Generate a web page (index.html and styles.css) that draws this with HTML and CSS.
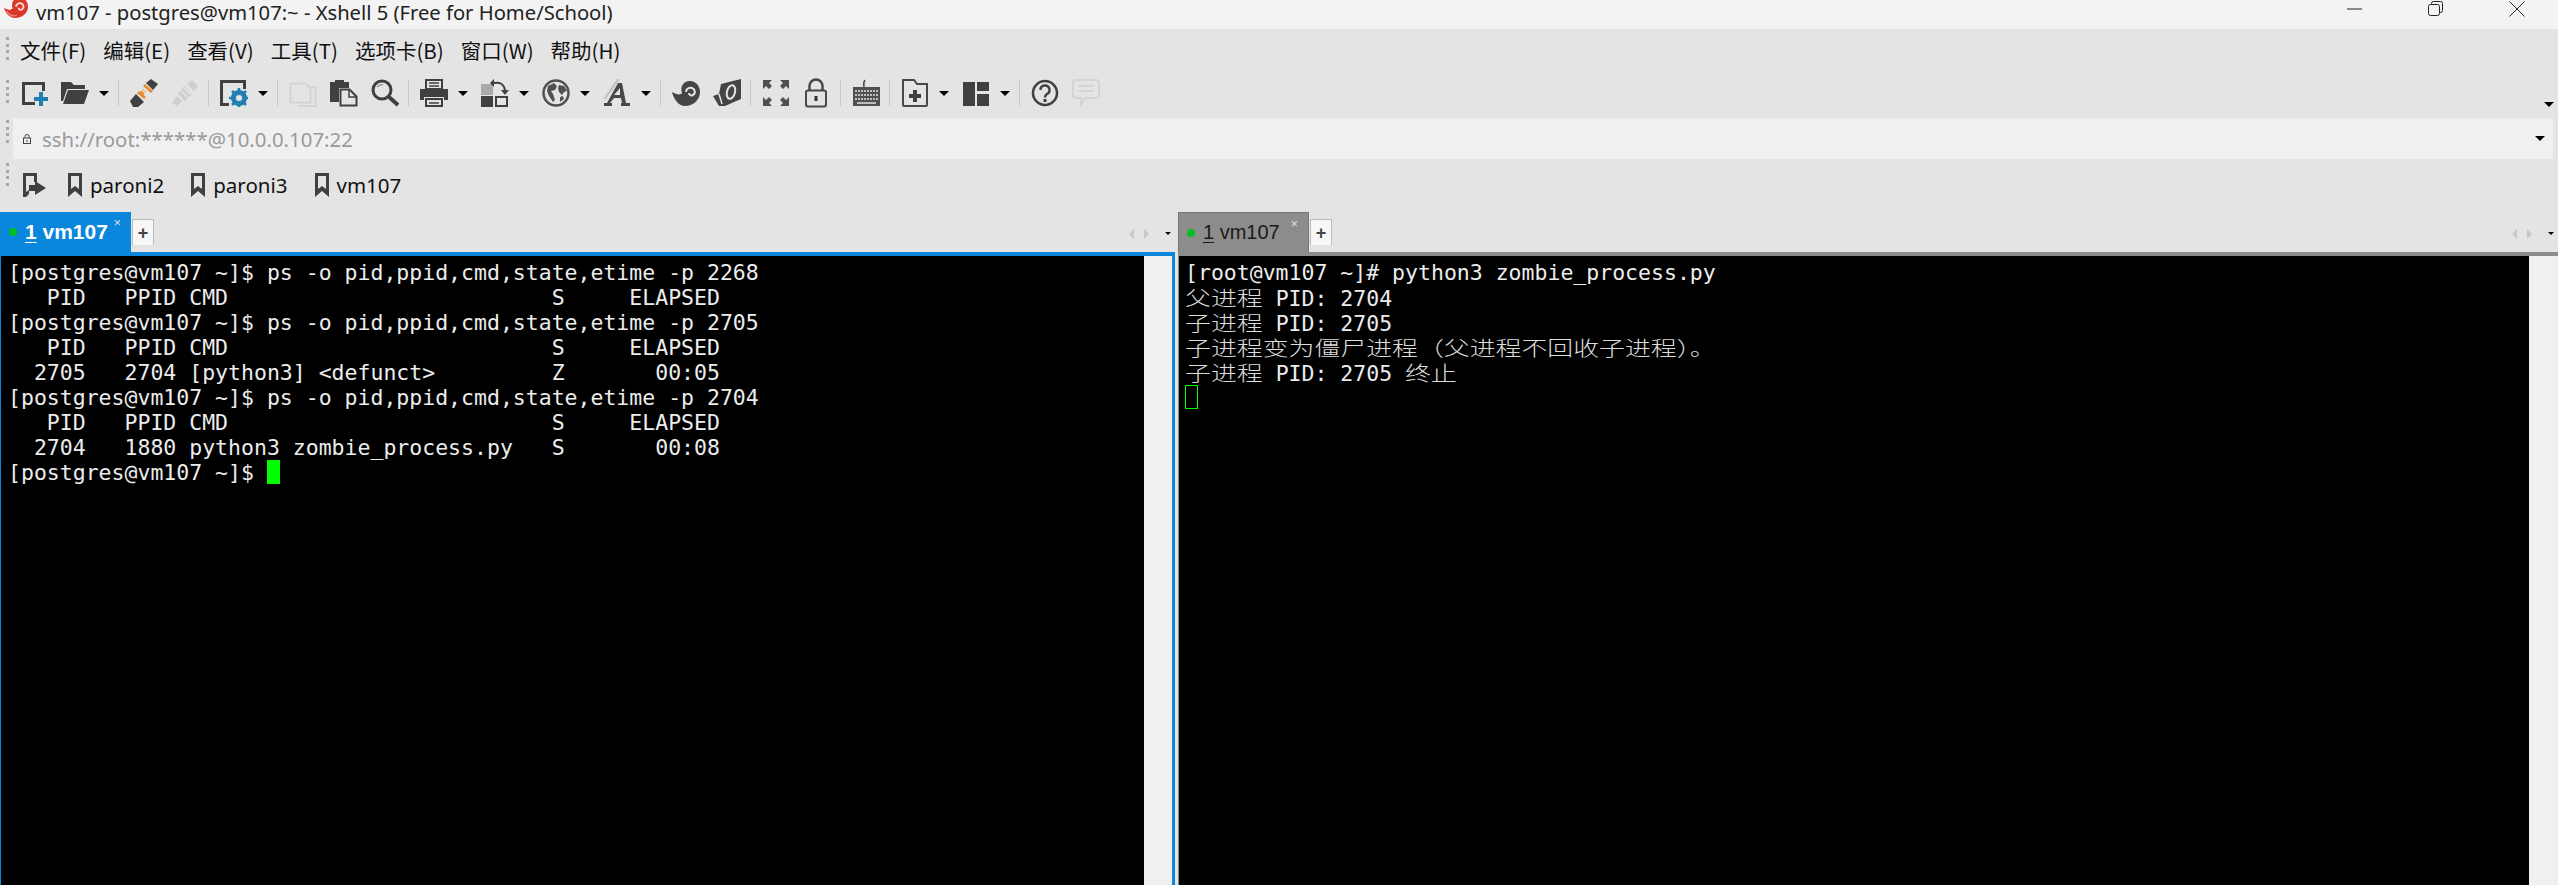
FILE: index.html
```html
<!DOCTYPE html>
<html lang="zh">
<head>
<meta charset="utf-8">
<title>Xshell</title>
<link rel="stylesheet" href="styles.css">
</head>
<body>
<svg class="defs" aria-hidden="true">
  <symbol id="bm" viewBox="0 0 16 24"><path d="M1 0h14v24l-7-6-7 6z" fill="#404040"/><path d="M4 3h8v13l-4-3-4 3z" fill="#e4e4e4"/></symbol>
</svg>
<header class="titlebar">
  <svg class="logo" viewBox="0 0 28 21"><path d="M0 9C5 12 9 12 10 10 8 4 11-3 18-3 24-3 28 2 28 8 28 15 22 21 13 21 7 21 2 16 0 9Z" fill="#d9382b"/><path d="M3 13c3 5 8 6 12 5" fill="none" stroke="#f08a7c" stroke-width="1.500"/><path d="M14 8C14 5 17 3 20 4 23 5 24 9 21 11 19 12 17 11 17 9" fill="none" stroke="#fbe3df" stroke-width="2"/></svg>
  <span class="title-text">vm107 - postgres@vm107:~ - Xshell 5 (Free for Home/School)</span>
  <div class="winctl">
    <svg viewBox="0 0 16 16"><path d="M0 8h15" stroke="#222" stroke-width="1" fill="none"/></svg>
    <svg viewBox="0 0 16 16"><rect x="0.5" y="3.500" width="11" height="11" rx="2" fill="none" stroke="#222"/><path d="M3.500 3V2.500a2 2 0 0 1 2-2h7a2 2 0 0 1 2 2v7a2 2 0 0 1-2 2H12" fill="none" stroke="#222"/></svg>
    <svg viewBox="0 0 16 16"><path d="M.5.5l15 15M15.500.5l-15 15" stroke="#222" stroke-width="1" fill="none"/></svg>
  </div>
</header>

<nav class="menubar">
  <i class="grip"></i>
  <span>文件(F)</span><span>编辑(E)</span><span>查看(V)</span><span>工具(T)</span><span>选项卡(B)</span><span>窗口(W)</span><span>帮助(H)</span>
</nav>

<div class="toolbar">
  <i class="grip"></i>
  <div class="tb-group">
    <svg class="ico" viewBox="0 0 28 28"><path d="M2 3h23v3H5v17h10v3H2z" fill="#404040"/><path d="M22 6h3v6h-3z" fill="#404040"/><path d="M19 13h4v5h5v4h-5v5h-4v-5h-5v-4h5z" fill="#1f7fb0"/></svg>
    <svg class="ico" viewBox="0 0 28 28"><path d="M0 3h10l3 3h11v4H6L2 22H0z" fill="#404040"/><path d="M7 11h21l-5 14H2z" fill="#404040"/></svg>
    <i class="caret"></i>
  </div>
  <i class="sep"></i>
  <div class="tb-group">
    <svg class="ico" viewBox="0 0 28 28"><path d="M21 0l7 5-5 6-7-7z" fill="#404040"/><path d="M0 22l6-7 8 8-6 5H3z" fill="#404040"/><path d="M15 5l8 7-2 2-8-7z" fill="#e88a2c"/><path d="M9 12l7 6-2 2-7-6z" fill="#e88a2c"/><path d="M13 10l-4 4 3 3 4-4z" fill="#e88a2c"/><path d="M12 11l4 4" stroke="#e4e4e4" stroke-width="1.500"/></svg>
    <svg class="ico" viewBox="0 0 28 28"><path d="M21 1l6 6-4 5-7-7zM13 7l8 8-7 7-7-7zM6 17l5 5-5 5-5-3z" fill="#cfcfcf"/><path d="M10 12l7 7M13 9l6 6" stroke="#e4e4e4" stroke-width="1.500"/></svg>
  </div>
  <i class="sep"></i>
  <div class="tb-group">
    <svg class="ico" viewBox="0 0 28 28"><path d="M0 1h26v3H3v20h6v3H0zM23 4h3v6h-3z" fill="#404040"/><circle cx="19" cy="19" r="6" fill="none" stroke="#1f7fb0" stroke-width="4"/><path d="M19 9v20M9 19h20M12 12l14 14M26 12L12 26" stroke="#1f7fb0" stroke-width="2.500"/><circle cx="19" cy="19" r="3" fill="#e4e4e4"/></svg>
    <i class="caret"></i>
  </div>
  <i class="sep"></i>
  <div class="tb-group">
    <svg class="ico" viewBox="0 0 28 28"><path d="M1.500 4.500h15l5 5v14h-20zM22 8h4.500v19H9" fill="none" stroke="#d4d4d4" stroke-width="2"/></svg>
    <svg class="ico" viewBox="0 0 28 28"><path d="M0 3h5V1h9v2h5v6H9v14H0z" fill="#404040"/><path d="M10.500 10.500h9l7 7v9h-16z" fill="#e4e4e4" stroke="#404040" stroke-width="2"/><path d="M19 10v8h8" fill="none" stroke="#404040" stroke-width="1.500"/></svg>
    <svg class="ico" viewBox="0 0 28 28"><circle cx="11" cy="11" r="9" fill="none" stroke="#404040" stroke-width="3"/><path d="M18 18l9 8" stroke="#404040" stroke-width="4"/><path d="M6 8q3-3 6-2" stroke="#999" stroke-width="1.500" fill="none"/></svg>
  </div>
  <i class="sep"></i>
  <div class="tb-group">
    <svg class="ico" viewBox="0 0 28 28"><path d="M6 1h16v9H6z" fill="none" stroke="#404040" stroke-width="2"/><path d="M9 4h10M9 7h10" stroke="#404040" stroke-width="1.500"/><path d="M0 10h28v11h-4v-3H4v3H0z" fill="#404040"/><path d="M6 20h16v7H6z" fill="none" stroke="#404040" stroke-width="2"/><path d="M9 24h10" stroke="#404040" stroke-width="1.500"/></svg>
    <i class="caret"></i>
    <svg class="ico" viewBox="0 0 28 28"><rect x="0" y="5" width="12" height="11" fill="#aaa"/><rect x="0" y="17" width="12" height="11" fill="#404040"/><rect x="15" y="18" width="11" height="9" fill="none" stroke="#404040" stroke-width="2"/><path d="M13 4q9-2 11 7" fill="none" stroke="#404040" stroke-width="2"/><path d="M20 11h8l-4 5zM13 0v8l-4-4z" fill="#404040"/></svg>
    <i class="caret"></i>
    <svg class="ico" viewBox="0 0 28 28"><circle cx="14" cy="14" r="12.500" fill="none" stroke="#505050" stroke-width="2.500"/><path d="M6 7l6-3 3 3-2 4-4 1 2 3 2 6-2 2-4-6-2-5zM17 6l5 1 3 5-3 1-2 3-3-3-1-4zM18 18l3-1 1 3-4 3z" fill="#505050"/></svg>
    <i class="caret"></i>
    <svg class="ico" viewBox="0 0 28 28"><path d="M0 20L14 0h3L3 20z" fill="#c4c4c4"/><path d="M15 4h4l4 20h4v3h-9v-3h1l-1-5h-7l-4 5h2v3H1v-3h3L15 4zm2 5l-6 7h6z" fill="#484848"/></svg>
    <i class="caret"></i>
  </div>
  <i class="sep"></i>
  <div class="tb-group">
    <svg class="ico" viewBox="0 0 28 28"><path d="M0 13C5 16 9 16 10 14 8 8 11 2 18 2 24 2 28 7 28 13 28 20 22 27 13 27 7 27 2 21 0 13Z" fill="#454545"/><path d="M14 13C14 10 17 8 20 9 23 10 24 14 21 16 19 17 17 16 17 14" fill="none" stroke="#e4e4e4" stroke-width="2"/></svg>
    <svg class="ico" viewBox="0 0 28 28"><path d="M8 5L28 0v20L12 27H6L0 17l6-2z" fill="#454545"/><ellipse cx="18" cy="13" rx="4" ry="7" transform="rotate(15 18 13)" fill="none" stroke="#e4e4e4" stroke-width="2"/><path d="M6 15l3 10" stroke="#e4e4e4" stroke-width="1.500"/></svg>
  </div>
  <i class="sep"></i>
  <div class="tb-group lockgroup">
    <svg class="ico" viewBox="0 0 28 28"><g fill="#505050"><path d="M1 1h9L7 4l3 3-3 3-3-3-3 3zM27 1h-9l3 3-3 3 3 3 3-3 3 3zM1 27h9l-3-3 3-3-3-3-3 3-3-3zM27 27h-9l3-3-3-3 3-3 3 3 3-3z"/></g></svg>
    <svg class="ico lock" viewBox="0 0 22 30"><path d="M4.500 13V8a6.500 6.500 0 0 1 13 0v5" fill="none" stroke="#484848" stroke-width="2.500"/><rect x="1" y="12.500" width="20" height="16" rx="2" fill="none" stroke="#484848" stroke-width="2"/><rect x="9.500" y="18" width="3" height="5" fill="#333"/></svg>
  </div>
  <i class="sep"></i>
  <div class="tb-group">
    <svg class="ico" viewBox="0 0 28 28"><path d="M12 8q-1-4 1-7" stroke="#505050" fill="none" stroke-width="1.500"/><rect x="1" y="8" width="27" height="19" fill="#505050"/><path d="M3 12h23M3 16h23M3 20h23" stroke="#e4e4e4" stroke-width="1.500" stroke-dasharray="2 1"/><path d="M5 24h19" stroke="#e4e4e4" stroke-width="1.500"/></svg>
  </div>
  <i class="sep"></i>
  <div class="tb-group">
    <svg class="ico" viewBox="0 0 28 28"><path d="M2 1h11l3 4h10v21a1 1 0 0 1-1 1H3a1 1 0 0 1-1-1z" fill="none" stroke="#484848" stroke-width="2"/><path d="M12 11h4v4h4v4h-4v4h-4v-4H8v-4h4z" fill="#404040"/></svg>
    <i class="caret"></i>
    <svg class="ico" viewBox="0 0 28 28"><path d="M1 3h12v24H1zM15 3h12v9H15zM15 15h12v12H15z" fill="#404040"/></svg>
    <i class="caret"></i>
  </div>
  <i class="sep"></i>
  <div class="tb-group">
    <svg class="ico" viewBox="0 0 28 28"><circle cx="14" cy="14" r="12" fill="none" stroke="#404040" stroke-width="2.500"/><path d="M9.500 11a4.500 4.500 0 1 1 6.500 4c-1.500 1-2 1.500-2 3.500" fill="none" stroke="#404040" stroke-width="2.500"/><rect x="12.500" y="20" width="3" height="3" fill="#404040"/></svg>
    <svg class="ico" viewBox="0 0 28 28"><path d="M4 1h20a3 3 0 0 1 3 3v12a3 3 0 0 1-3 3H13l-4 7v-7H4a3 3 0 0 1-3-3V4a3 3 0 0 1 3-3z" fill="none" stroke="#d4d4d4" stroke-width="2"/><path d="M6 7h16M6 12h16" stroke="#d4d4d4" stroke-width="2"/></svg>
  </div>
  <i class="caret overflow"></i>
</div>

<div class="addrrow">
  <i class="grip"></i>
  <div class="addrbar">
    <svg class="addrlock" viewBox="0 0 8 10"><path d="M2 4V2.500a2 2 0 0 1 4 0V4" fill="none" stroke="#444"/><rect x=".5" y="4" width="7" height="5.500" fill="none" stroke="#444"/><rect x="3.500" y="6" width="1" height="2" fill="#444"/></svg>
    <span class="addrtext">ssh://root:******@10.0.0.107:22</span>
    <i class="caret"></i>
  </div>
</div>

<div class="bookmarks">
  <i class="grip"></i>
  <svg class="bmgo" viewBox="0 0 24 24"><path d="M1 0h14v9h-3V3H4v16l3-2v4l-3 3H1z" fill="#404040"/><path d="M13 8l11 7-11 7v-4H7v-6h6z" fill="#404040"/></svg>
  <div class="bmitem"><svg class="bmicon"><use href="#bm"/></svg><span>paroni2</span></div>
  <div class="bmitem"><svg class="bmicon"><use href="#bm"/></svg><span>paroni3</span></div>
  <div class="bmitem"><svg class="bmicon"><use href="#bm"/></svg><span>vm107</span></div>
</div>

<main class="panes">
  <section class="pane pane-left">
    <div class="tabstrip">
      <div class="tab tab-active"><i class="dot"></i><span class="tabname"><u>1</u> vm107</span><span class="tabx">×</span></div>
      <div class="plus">+</div>
      <div class="tabnav"><i class="navl"></i><i class="navr"></i><i class="navc"></i></div>
    </div>
    <div class="termframe frame-blue">
      <pre class="term"><span class="line">[postgres@vm107 ~]$ ps -o pid,ppid,cmd,state,etime -p 2268</span><span class="line">   PID   PPID CMD                         S     ELAPSED</span><span class="line">[postgres@vm107 ~]$ ps -o pid,ppid,cmd,state,etime -p 2705</span><span class="line">   PID   PPID CMD                         S     ELAPSED</span><span class="line">  2705   2704 [python3] &lt;defunct&gt;         Z       00:05</span><span class="line">[postgres@vm107 ~]$ ps -o pid,ppid,cmd,state,etime -p 2704</span><span class="line">   PID   PPID CMD                         S     ELAPSED</span><span class="line">  2704   1880 python3 zombie_process.py   S       00:08</span><span class="line">[postgres@vm107 ~]$ <i class="cursor"></i></span></pre>
      <div class="scrollbar"></div>
    </div>
  </section>
  <section class="pane pane-right">
    <div class="tabstrip">
      <div class="tab tab-idle"><i class="dot"></i><span class="tabname"><u>1</u> vm107</span><span class="tabx">×</span></div>
      <div class="plus">+</div>
      <div class="tabnav"><i class="navl"></i><i class="navr"></i><i class="navc"></i></div>
    </div>
    <div class="termframe frame-gray">
      <pre class="term"><span class="line">[root@vm107 ~]# python3 zombie_process.py</span><span class="line"><span class="cjk w3">父进程</span> PID: 2704</span><span class="line"><span class="cjk w3">子进程</span> PID: 2705</span><span class="line"><span class="cjk w21">子进程变为僵尸进程（父进程不回收子进程）。</span></span><span class="line"><span class="cjk w3">子进程</span> PID: 2705 <span class="cjk w2">终止</span></span><span class="line"><i class="cursor cursor-hollow"></i></span></pre>
      <div class="scrollbar"></div>
    </div>
  </section>
</main>
</body>
</html>
```

FILE: styles.css
```css
* { box-sizing: border-box; }
html, body { margin: 0; padding: 0; height: 885px; overflow: hidden; }
body {
  width: 2558px;
  background: #e4e4e4;
  color: #111;
  font-family: "Noto Sans", "Noto Sans CJK SC", sans-serif;
  font-size: 20px;
  display: flex;
  flex-direction: column;
}
.defs { display: none; }

.titlebar {
  height: 29px;
  background: #f3f3f3;
  display: flex;
  align-items: flex-start;
  padding-left: 4px;
  flex: none;
}
.logo { width: 24px; height: 18px; flex: none; }
.title-text { margin-left: 8px; font-size: 20.2px; line-height: 24px; color: #222; white-space: nowrap; }
.winctl { margin-left: auto; display: flex; gap: 65px; padding-right: 33px; padding-top: 1px; }
.winctl svg { width: 16px; height: 16px; }

.grip {
  width: 3px;
  flex: none;
  border-left: 3px dotted #a8a8a8;
  height: 23px;
  margin-left: 6px;
}

.menubar {
  height: 41px;
  flex: none;
  display: flex;
  align-items: center;
  gap: 17px;
  font-family: "Noto Sans CJK SC", "Noto Sans", sans-serif;
  font-size: 20.5px;
  line-height: 24px;
}
.menubar .grip { margin-right: -6px; margin-top: -2px; }

.toolbar {
  height: 48px;
  flex: none;
  display: flex;
  align-items: center;
  position: relative;
  padding-bottom: 2px;
}
.toolbar .grip { margin-right: 11px; margin-top: -4px; }
.tb-group { display: flex; align-items: center; gap: 13px; }
.ico { width: 28px; height: 28px; flex: none; display: block; }
.ico.lock { width: 22px; height: 30px; margin-left: 3px; margin-right: 4px; }
.lockgroup { gap: 12px; }
.caret {
  display: block;
  flex: none;
  width: 0; height: 0;
  border-left: 5px solid transparent;
  border-right: 5px solid transparent;
  border-top: 5px solid #000;
  margin-left: -3px;
}
.sep { width: 1px; height: 26px; background: #c8c8c8; margin: 0 11px 0 9px; flex: none; }
.overflow { position: absolute; right: 4px; top: 32px; }

.addrrow { height: 41px; flex: none; display: flex; align-items: flex-start; padding-right: 5px; }
.addrrow .grip { margin-top: 2px; margin-right: 3px; margin-left: 6px; }
.addrbar {
  flex: 1;
  height: 41px;
  margin-left: 1px;
  background: #f0f0f0;
  display: flex;
  align-items: center;
  padding: 0 8px 0 10px;
}
.addrlock { width: 8px; height: 10px; flex: none; }
.addrtext { margin-left: 11px; color: #9a9a9a; font-size: 20.4px; }
.addrbar .caret { margin-left: auto; }

.bookmarks { height: 53px; flex: none; display: flex; align-items: flex-start; }
.bookmarks .grip { margin-top: 4px; margin-right: 13px; }
.bmgo { width: 24px; height: 24px; margin-top: 14px; flex: none; }
.bmitem { display: flex; align-items: center; gap: 7px; margin-left: 21px; height: 26px; margin-top: 13px; font-size: 20.5px; }
.bmicon { width: 16px; height: 24px; flex: none; }
.bmitem + .bmitem { margin-left: 26px; }

.panes { flex: 1; display: flex; min-height: 0; }
.pane { display: flex; flex-direction: column; }
.pane-left { width: 1178px; }
.pane-right { flex: 1; }
.tabstrip { height: 40px; flex: none; display: flex; align-items: flex-end; position: relative; }
.tab {
  width: 131px;
  height: 40px;
  position: relative;
  display: flex;
  align-items: center;
  font-family: "Liberation Sans", sans-serif;
  padding-left: 9px;
}
.tab-active { background: #0a86dc; color: #fff; font-weight: 700; font-size: 21px; }
.tab-idle { background: #8c8c8c; color: #1a1a1a; border: 1px solid #777; border-bottom: 0; font-size: 20px; padding-left: 8px; }
.dot { width: 8px; height: 8px; border-radius: 50%; background: #00c020; flex: none; }
.tabname { margin-left: 8px; }
.tab u { text-underline-offset: 3px; text-decoration-thickness: 1px; }
.tabx { position: absolute; right: 10px; top: 2px; font-size: 13px; font-weight: 400; line-height: 18px; color: #dde; }
.plus {
  width: 22px;
  height: 26px;
  margin: 0 0 7px 1px;
  background: #f7f7f7;
  border: 1px solid #bbb;
  border-bottom: 0;
  font-family: "Liberation Sans", sans-serif;
  font-size: 18px;
  font-weight: 700;
  color: #444;
  display: flex;
  align-items: center;
  justify-content: center;
  line-height: 1;
}
.tabnav { margin-left: auto; display: flex; align-items: center; height: 40px; padding-top: 3px; }
.pane-left .tabnav { padding-right: 7px; }
.pane-right .tabnav { padding-right: 4px; }
.navl, .navr, .navc { display: block; width: 0; height: 0; }
.navl { border: 4px solid transparent; border-left: 0; border-right: 5px solid #c8c8c8; border-top-width: 5px; border-bottom-width: 5px; }
.navr { border: 4px solid transparent; border-right: 0; border-left: 5px solid #c8c8c8; border-top-width: 5px; border-bottom-width: 5px; margin-left: 10px; }
.navc { border-left: 3px solid transparent; border-right: 3px solid transparent; border-top: 3px solid #000; margin-left: 16px; }

.termframe { flex: 1; display: flex; min-height: 0; border-top: 4px solid; }
.frame-blue { border-color: #0a86dc; border-left: 1px solid #0a86dc; border-right: 3px solid #0a86dc; margin-right: 3px; }
.frame-gray { border-top-color: #8c8c8c; border-left: 1px solid #8c8c8c; }
.term {
  flex: 1;
  margin: 0;
  background: #000;
  color: #ececec;
  padding: 4px 0 0 7px;
  font-family: "DejaVu Sans Mono", "Noto Sans CJK SC", monospace;
  font-size: 21.5px;
  line-height: 25px;
  overflow: hidden;
}
.frame-gray .term { padding-left: 6px; }
.line { display: block; height: 25px; white-space: pre; }
.cjk {
  display: inline-block;
  font-family: "Noto Sans CJK SC", sans-serif;
  font-size: 20px;
  line-height: 25px;
  font-weight: 300;
  color: #dcdcdc;
  transform: scaleX(1.294);
  transform-origin: 0 50%;
}
.w2 { width: 51.8px; }
.w3 { width: 77.7px; }
.w21 { width: 544px; }
.cursor { display: inline-block; width: 13px; height: 24px; background: #00ff00; vertical-align: top; }
.cursor-hollow { background: transparent; border: 1px solid #00ff00; }
.scrollbar { width: 28px; background: #f0f0f0; flex: none; }
.frame-gray .scrollbar { width: 29px; }
```
